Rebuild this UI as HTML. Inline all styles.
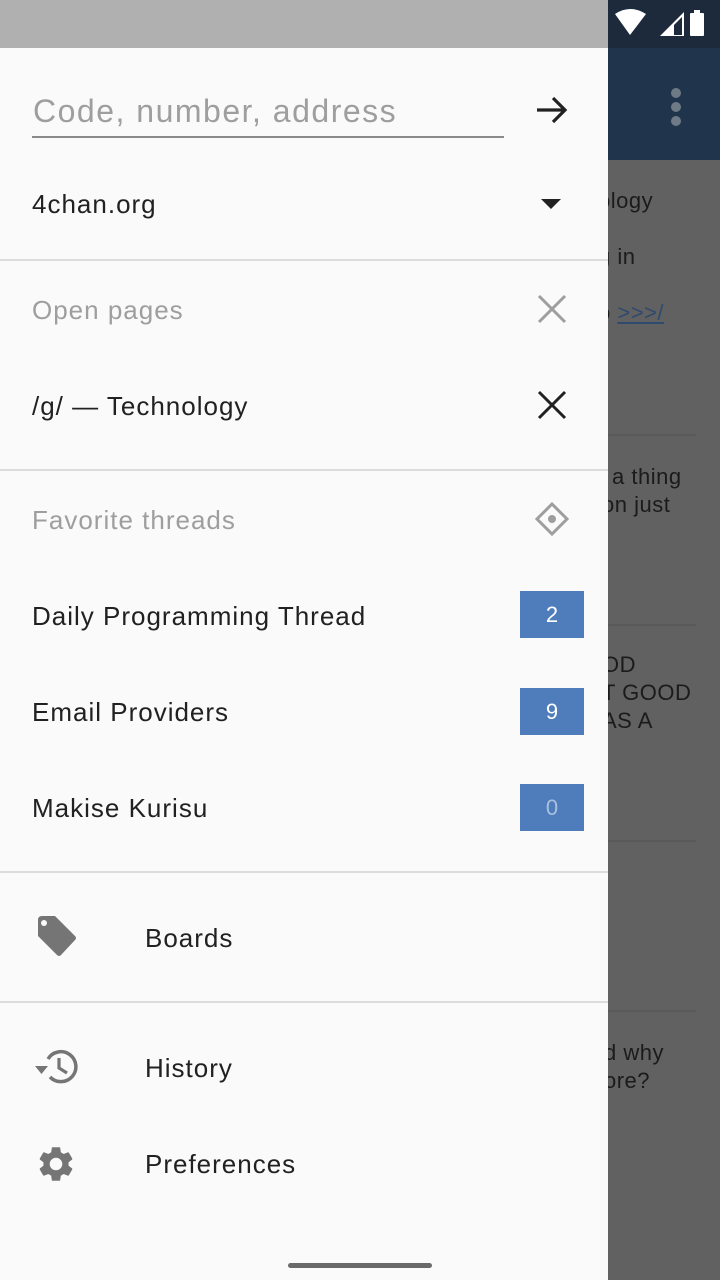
<!DOCTYPE html>
<html><head><style>
body{margin:0;width:720px;height:1280px;position:relative;overflow:hidden;font-family:"Liberation Sans",sans-serif;background:#616161}
.a{position:absolute;white-space:nowrap}
.rt{font-size:22px;color:#1b1b1b;left:598px;letter-spacing:0.5px}
.hr{position:absolute;height:2px;background:#595959;left:600px;width:96px}
#d{position:absolute;left:0;top:0;width:608px;height:1280px;background:#fafafa}
.t{position:absolute;font-size:26px;color:#212121;white-space:nowrap;line-height:30px;letter-spacing:1px}
.g{color:#9e9e9e}
.dv{position:absolute;left:0;width:608px;height:2px;background:#dcdcdc}
.b{position:absolute;left:520px;width:64px;height:47px;background:#4f7dbb;color:#fff;font-size:22px;text-align:center;line-height:47px}
</style></head><body>
<div class="a" style="left:0;top:0;width:720px;height:48px;background:#1c2a3c"></div>
<div class="a" style="left:0;top:48px;width:720px;height:112px;background:#20344b"></div>
<div class="a" style="left:671px;top:88px;width:10px;height:10px;border-radius:5px;background:#6f7a87"></div>
<div class="a" style="left:671px;top:102px;width:10px;height:10px;border-radius:5px;background:#6f7a87"></div>
<div class="a" style="left:671px;top:116px;width:10px;height:10px;border-radius:5px;background:#6f7a87"></div>
<svg class="a" style="left:612px;top:8px" width="100" height="32"><path d="M3 6 Q18 -4 34 6 L18 27 Z" fill="#fff"/><path d="M48 28 L72 4 V28 Z" fill="#fff"/><path d="M62 27 V17 L70 9 V27 Z" fill="#1c2a3c"/><rect x="78" y="5" width="14" height="23" rx="1" fill="#fff"/><rect x="82" y="2" width="6" height="4" fill="#fff"/></svg>
<div class="a rt" style="top:188px">ology</div>
<div class="a rt" style="top:244px">g in</div>
<div class="a rt" style="top:300px">o <span style="color:#2e4a6e;text-decoration:underline">&gt;&gt;&gt;/</span></div>
<div class="hr" style="top:434px"></div>
<div class="a rt" style="top:464px;left:612px">a thing</div>
<div class="a rt" style="top:492px;left:602px">on just</div>
<div class="hr" style="top:624px"></div>
<div class="a rt" style="top:652px;left:602px">OD</div>
<div class="a rt" style="top:680px;left:602px">T GOOD</div>
<div class="a rt" style="top:708px;left:602px">AS A</div>
<div class="hr" style="top:840px"></div>
<div class="hr" style="top:1010px"></div>
<div class="a rt" style="top:1040px;left:604px">d why</div>
<div class="a rt" style="top:1068px;left:604px">ore?</div>
<div id="d">
<div class="a" style="left:0;top:0;width:608px;height:48px;background:#b0b0b0"></div>
<div class="t g" style="left:33px;top:93px;font-size:32px;line-height:36px;letter-spacing:1.5px">Code, number, address</div>
<div class="a" style="left:32px;top:136px;width:472px;height:2px;background:#8a8a8a"></div>
<svg class="a" style="left:534px;top:92px" width="36" height="36"><path d="M3 18 H31 M19 6 L31 18 L19 30" stroke="#212121" stroke-width="3.2" fill="none"/></svg>
<div class="t" style="left:32px;top:189px">4chan.org</div>
<svg class="a" style="left:540px;top:197px" width="24" height="14"><path d="M1 2 H21 L11 12 Z" fill="#212121"/></svg>
<div class="dv" style="top:259px"></div>
<div class="t g" style="left:32px;top:295px">Open pages</div>
<svg class="a" style="left:536px;top:293px" width="32" height="32"><path d="M3 3 L29 29 M29 3 L3 29" stroke="#9e9e9e" stroke-width="3"/></svg>
<div class="t" style="left:32px;top:391px">/g/ — Technology</div>
<svg class="a" style="left:536px;top:389px" width="32" height="32"><path d="M3 3 L29 29 M29 3 L3 29" stroke="#212121" stroke-width="3"/></svg>
<div class="dv" style="top:469px"></div>
<div class="t g" style="left:32px;top:505px">Favorite threads</div>
<svg class="a" style="left:534px;top:501px" width="36" height="36"><path d="M18 3 L33 18 L18 33 L3 18 Z" stroke="#9e9e9e" stroke-width="3" fill="none"/><circle cx="18" cy="18" r="4" fill="#9e9e9e"/></svg>
<div class="t" style="left:32px;top:601px">Daily Programming Thread</div>
<div class="b" style="top:591px">2</div>
<div class="t" style="left:32px;top:697px">Email Providers</div>
<div class="b" style="top:688px">9</div>
<div class="t" style="left:32px;top:793px">Makise Kurisu</div>
<div class="b" style="top:784px;color:#a9c0df">0</div>
<div class="dv" style="top:871px"></div>
<svg class="a" style="left:35px;top:916px" width="42" height="42"><path d="M3 4 Q3 0 7 0 H20 L40 20 Q42 22 40 24 L26 39 Q24 41 22 39 L3 20 Z" fill="#757575"/><circle cx="9" cy="7" r="3" fill="#fafafa"/></svg>
<div class="t" style="left:145px;top:923px">Boards</div>
<div class="dv" style="top:1001px"></div>
<svg class="a" style="left:34px;top:1047px" width="44" height="40"><path d="M14 12 A15 15 0 1 1 16 30" stroke="#757575" stroke-width="3.5" fill="none"/><path d="M1 19 L14 19 L7.5 27 Z" fill="#757575"/><path d="M25 11 V21 L33 26" stroke="#757575" stroke-width="3.2" fill="none"/></svg>
<div class="t" style="left:145px;top:1053px">History</div>
<svg class="a" style="left:35px;top:1143px" width="42" height="42" viewBox="0 0 24 24"><path fill="#757575" d="M19.14 12.94c.04-.3.06-.61.06-.94 0-.32-.02-.64-.07-.94l2.030-1.58a.49.49 0 0 0 .12-.61l-1.920-3.32a.488.488 0 0 0-.59-.22l-2.390.96c-.5-.38-1.030-.7-1.620-.94l-.36-2.54a.484.484 0 0 0-.48-.41h-3.840c-.24 0-.43.17-.47.41l-.36 2.54c-.59.24-1.130.57-1.620.94l-2.390-.96c-.22-.08-.47 0-.59.22L2.740 8.870c-.12.21-.08.47.12.61l2.030 1.580c-.05.3-.09.63-.09.94s.02.64.07.94l-2.030 1.580a.49.49 0 0 0-.12.61l1.920 3.320c.12.22.37.29.59.22l2.390-.96c.5.38 1.030.7 1.620.94l.36 2.540c.05.24.24.41.48.41h3.840c.24 0 .44-.17.47-.41l.36-2.540c.59-.24 1.130-.56 1.620-.94l2.390.96c.22.08.47 0 .59-.22l1.920-3.320c.12-.22.07-.47-.12-.61l-2.010-1.580zM12 15.6c-1.980 0-3.600-1.620-3.600-3.600s1.620-3.600 3.600-3.600 3.600 1.620 3.600 3.600-1.620 3.600-3.600 3.600z"/></svg>
<div class="t" style="left:145px;top:1149px">Preferences</div>
</div>
<div class="a" style="left:288px;top:1263px;width:144px;height:5px;border-radius:3px;background:#6a6a6a"></div>
</body></html>
